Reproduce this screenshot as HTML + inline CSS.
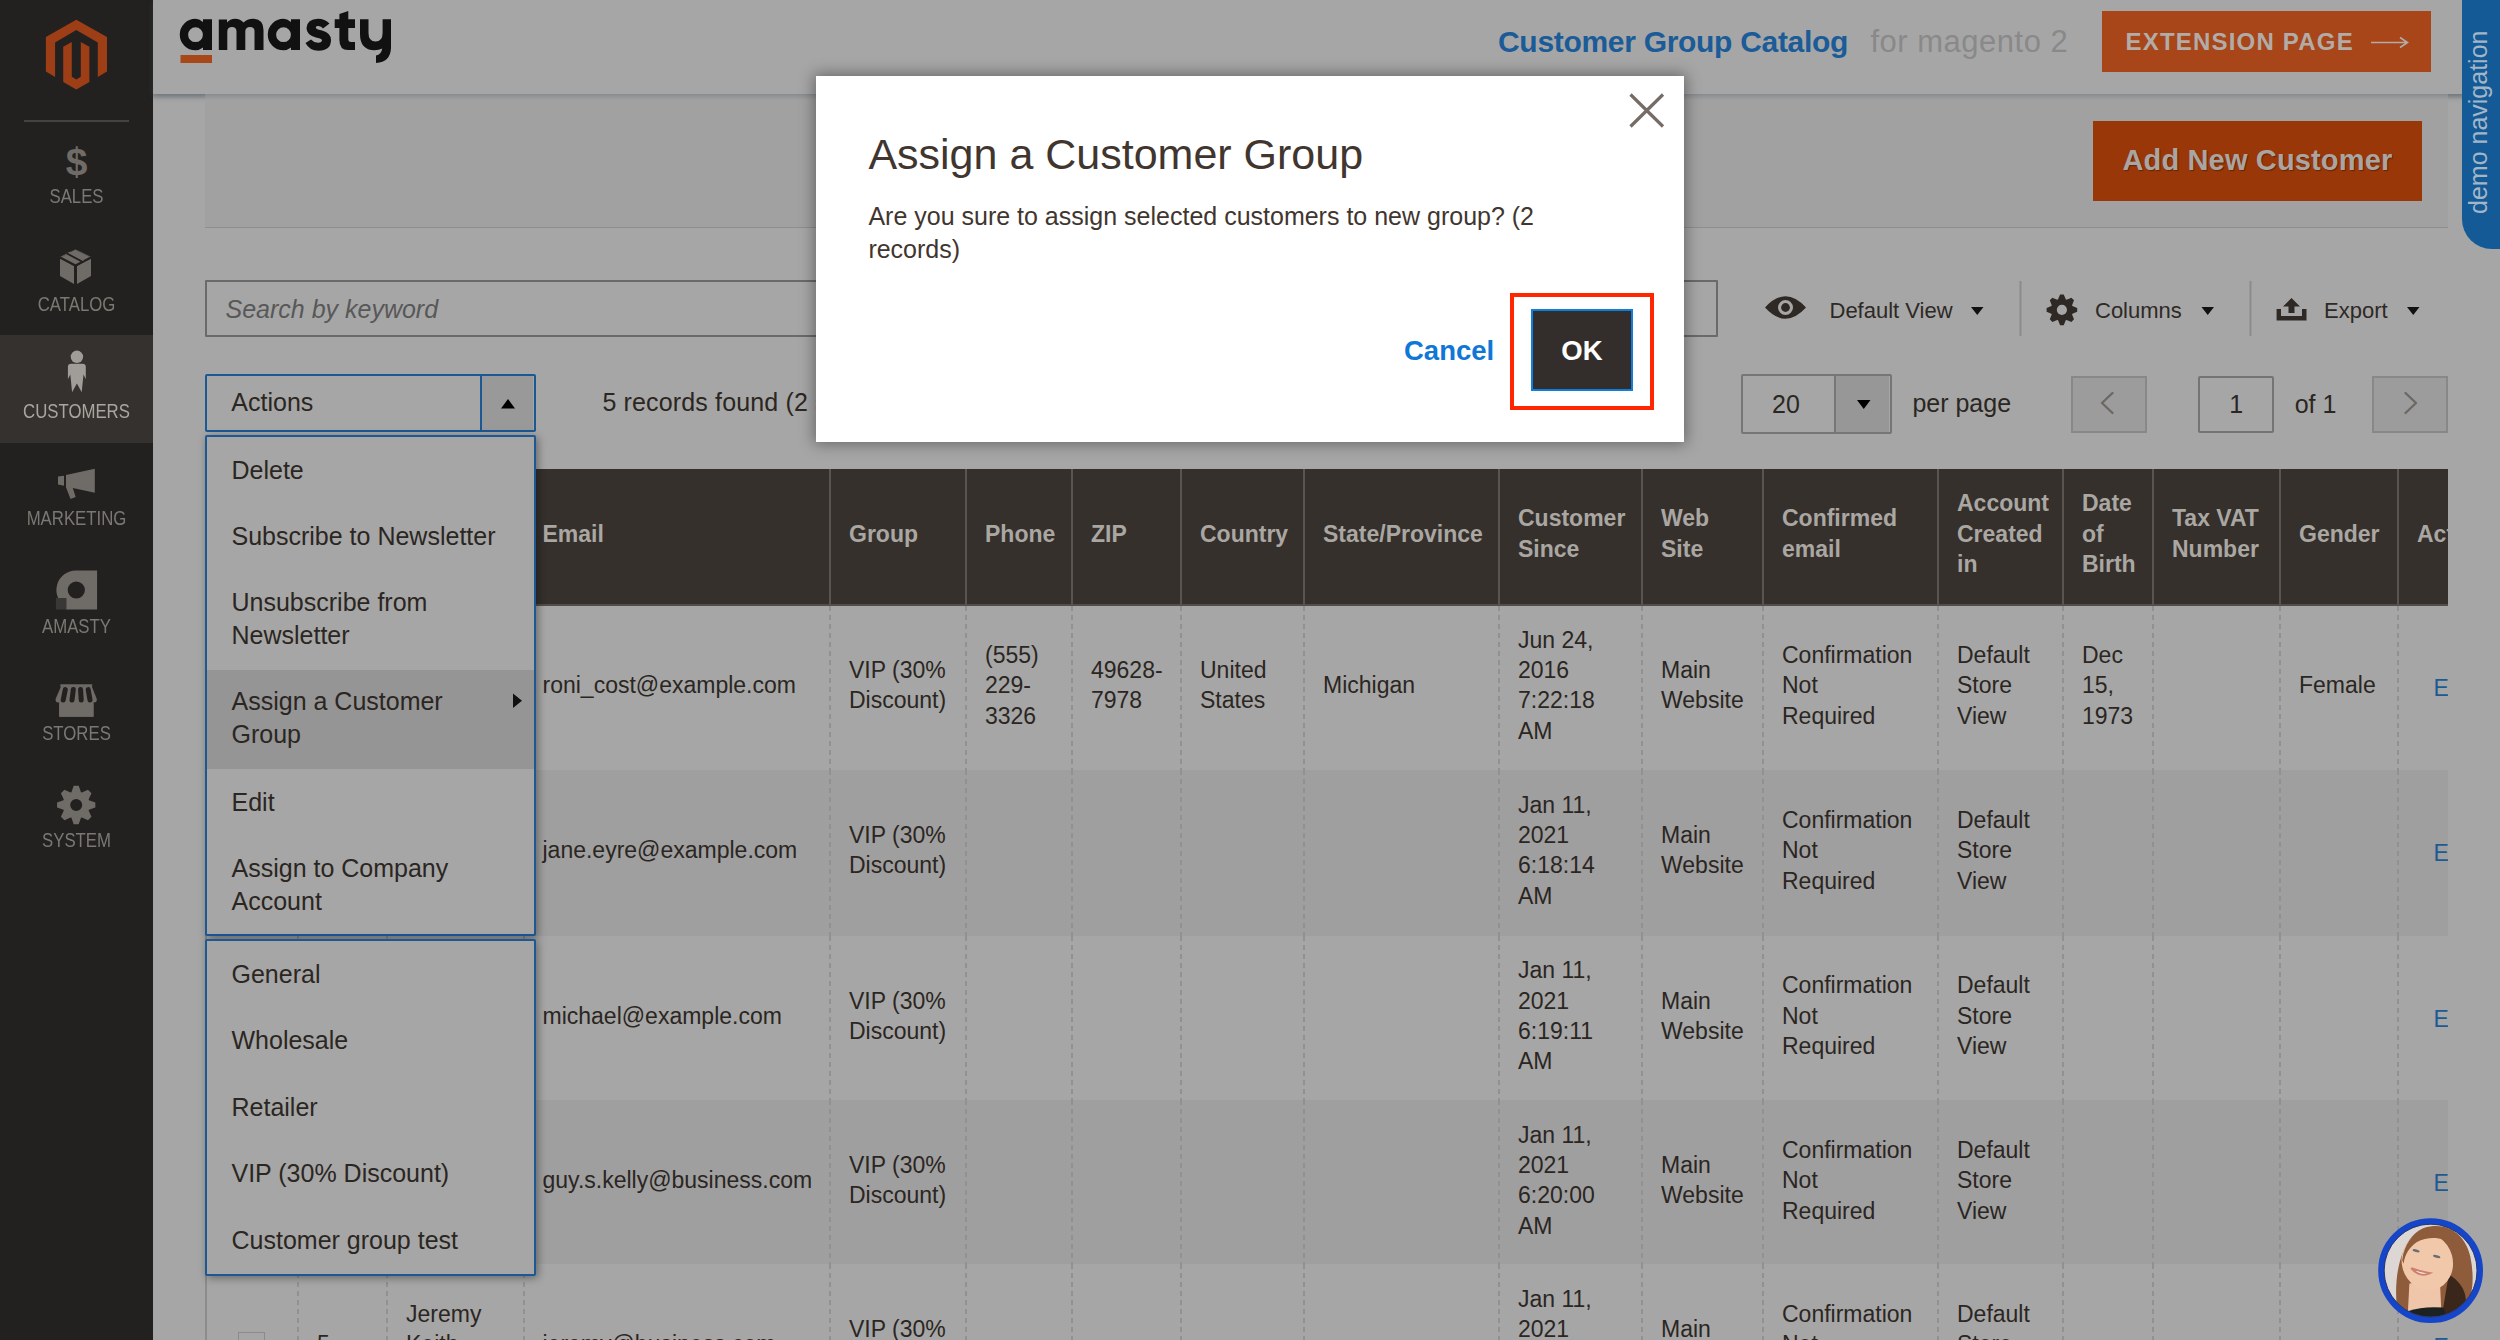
<!DOCTYPE html>
<html><head><meta charset="utf-8"><title>Customers</title>
<style>
*{box-sizing:border-box;margin:0;padding:0}
html,body{width:2500px;height:1340px;overflow:hidden}
body{position:relative;background:#a6a6a6;font-family:"Liberation Sans",sans-serif;color:#2b2622}
.t{position:absolute;white-space:nowrap}
.b{position:absolute}
svg{position:absolute;overflow:visible}
</style></head><body>

<div class="b" style="left:0.00px;top:0.00px;width:153.00px;height:1340.00px;background:#222120"></div>
<div class="b" style="left:0.00px;top:335.00px;width:153.00px;height:108.00px;background:#35312e"></div>
<div class="b" style="left:24.00px;top:119.50px;width:105.00px;height:2.00px;background:#46423f"></div>
<svg style="left:0;top:0" width="153" height="100" viewBox="0 0 153 100">
<path fill="#9d3e17" d="M76.3 19.7 L107 37 L107 71.6 L97.8 77 L97.8 42.4 L76.3 30 L55.1 42.4 L55.1 77 L45.85 71.6 L45.85 37 Z"/>
<path fill="#9d3e17" d="M63.2 46.8 L71.8 42 L71.8 76.7 L76.3 79.4 L80.8 76.7 L80.8 42 L89.4 46.8 L89.4 82 L76.3 89.5 L63.2 82 Z"/>
</svg>
<div class="t" style="left:0.00px;top:187.49px;font-size:19.50px;line-height:19.50px;color:#7b7873;width:153.00px;text-align:center;transform:scaleX(0.86);transform-origin:76.5px 0;">SALES</div>
<div class="t" style="left:0.00px;top:295.49px;font-size:19.50px;line-height:19.50px;color:#7b7873;width:153.00px;text-align:center;transform:scaleX(0.86);transform-origin:76.5px 0;">CATALOG</div>
<div class="t" style="left:0.00px;top:402.49px;font-size:19.50px;line-height:19.50px;color:#a9a59f;width:153.00px;text-align:center;transform:scaleX(0.86);transform-origin:76.5px 0;">CUSTOMERS</div>
<div class="t" style="left:0.00px;top:509.49px;font-size:19.50px;line-height:19.50px;color:#7b7873;width:153.00px;text-align:center;transform:scaleX(0.86);transform-origin:76.5px 0;">MARKETING</div>
<div class="t" style="left:0.00px;top:617.49px;font-size:19.50px;line-height:19.50px;color:#7b7873;width:153.00px;text-align:center;transform:scaleX(0.86);transform-origin:76.5px 0;">AMASTY</div>
<div class="t" style="left:0.00px;top:724.49px;font-size:19.50px;line-height:19.50px;color:#7b7873;width:153.00px;text-align:center;transform:scaleX(0.86);transform-origin:76.5px 0;">STORES</div>
<div class="t" style="left:0.00px;top:831.49px;font-size:19.50px;line-height:19.50px;color:#7b7873;width:153.00px;text-align:center;transform:scaleX(0.86);transform-origin:76.5px 0;">SYSTEM</div>
<div class="t" style="left:0.00px;top:141.99px;font-size:39.00px;line-height:39.00px;color:#6f6b67;font-weight:bold;width:153.00px;text-align:center;">$</div>
<svg style="left:0;top:0" width="153" height="900">
<g fill="#6f6b67">
<path d="M75.5 249 L91 257 L91 276 L77 284 L77 266 L91 258 Z" />
<path d="M75.5 249 L60 257 L60 276 L74 284 L74 266 L60 258 Z" />
<path d="M60.5 257.5 L75.5 249.5 L90.5 257.5 L75.5 265.5 Z"/>
</g>
<path d="M60 257.5 L75.5 265.5 L91 257.5" stroke="#222120" stroke-width="2.2" fill="none"/>
<path d="M67 253.2 L82 261.2" stroke="#222120" stroke-width="2.2" fill="none"/>
<path d="M68.5 252.4 L83.5 260.4" stroke="#6f6b67" stroke-width="1.6" fill="none"/>
</svg>
<svg style="left:0;top:0" width="153" height="900">
<g fill="#a09c97">
<circle cx="76.9" cy="356.8" r="6.2"/>
<path d="M67.9 366.7 Q67.9 363.7 71.2 363.7 L82.5 363.7 Q85.8 363.7 85.8 366.7 L85.8 379.2 L83.5 374.4 L81.7 392.3 L76.9 383.4 L72.1 392.3 L70.3 374.4 L67.9 379.2 Z"/>
</g>
</svg>
<svg style="left:0;top:0" width="153" height="900">
<g fill="#6f6b67">
<path d="M66 475.1 L94.8 468.8 L94.8 492.8 L72.8 488 L75.7 497 L70.5 499 L66 487.2 Z"/>
<path d="M58 476.6 L64 475.7 L64 485.7 L58 484.6 Z"/>
</g>
</svg>
<svg style="left:0;top:0" width="153" height="900">
<path fill="#6f6b67" fill-rule="evenodd" d="M76.3 570.5 L97.1 570.5 L97.1 609.5 L66 609.5 L66 606.8 A19.5 19.5 0 0 1 76.3 570.5 Z M76.3 581.4 A8.6 8.6 0 1 0 76.3 598.6 A8.6 8.6 0 1 0 76.3 581.4 Z"/>
<rect x="55.9" y="598" width="10.6" height="11.5" fill="#3a3836"/>
</svg>
<svg style="left:0;top:0" width="153" height="900">
<g fill="#6f6b67">
<rect x="60.4" y="684.3" width="31.8" height="2.6"/>
<path d="M61 686.5 L91.8 686.5 L96.8 699 Q97 702.6 94 702.6 L58.3 702.6 Q55.3 702.6 55.6 699 Z"/>
<rect x="59.2" y="702" width="34.3" height="14.7"/>
</g>
<g stroke="#222120" stroke-width="5" stroke-linecap="round">
<path d="M65.3 689.6 L63.2 700"/><path d="M73.3 689.6 L72 700"/><path d="M80.6 689.6 L81.2 700"/><path d="M88.2 689.6 L90 700"/>
</g>
<rect x="59.2" y="703.3" width="34.3" height="13.4" fill="#6f6b67"/>
</svg>
<svg style="left:0;top:0" width="153" height="900">
<path fill="#6f6b67" fill-rule="evenodd" d="M71.41 792.27 L73.70 785.86 L78.70 785.86 L80.99 792.27 L81.81 792.61 L87.96 789.70 L91.50 793.24 L88.59 799.39 L88.93 800.21 L95.34 802.50 L95.34 807.50 L88.93 809.79 L88.59 810.61 L91.50 816.76 L87.96 820.30 L81.81 817.39 L80.99 817.73 L78.70 824.14 L73.70 824.14 L71.41 817.73 L70.59 817.39 L64.44 820.30 L60.90 816.76 L63.81 810.61 L63.47 809.79 L57.06 807.50 L57.06 802.50 L63.47 800.21 L63.81 799.39 L60.90 793.24 L64.44 789.70 L70.59 792.61 Z M76.2 799 A6 6 0 1 0 76.2 811 A6 6 0 1 0 76.2 799 Z"/>
</svg>
<div class="b" style="left:153.00px;top:0.00px;width:2347.00px;height:94.00px;background:#a6a6a6;box-shadow:0 2px 6px rgba(60,70,80,.45)"></div>
<svg style="left:0;top:0" width="420" height="100">
<g fill="#111111">
<path fill-rule="evenodd" d="M212 19.2 L203 19.2 L203 22 Q199 18.8 195.5 18.8 A15.7 15.7 0 1 0 195.5 50.3 Q199.5 50.3 203 47.6 L203 50 L212 50 Z M195.5 27.3 A7.4 7.4 0 1 0 195.5 42.1 A7.4 7.4 0 1 0 195.5 27.3 Z"/>
<path d="M218.8 19.5 L227 19.5 L227 22.5 Q230 18.7 235 18.7 Q240.5 18.7 243.5 22.5 Q247 18.7 253 18.7 Q263.5 19 263.5 30 L263.5 50 L254.5 50 L254.5 31 Q254.5 27 250 27 Q245.3 27 245.3 31.5 L245.3 50 L236.5 50 L236.5 31.5 Q236.5 27 232 27 Q227.3 27 227.3 31.5 L227.3 50 L218.8 50 Z"/>
<path fill-rule="evenodd" d="M300 19.2 L291 19.2 L291 22 Q287 18.8 283.5 18.8 A15.7 15.7 0 1 0 283.5 50.3 Q287.5 50.3 291 47.6 L291 50 L300 50 Z M283.5 27.3 A7.4 7.4 0 1 0 283.5 42.1 A7.4 7.4 0 1 0 283.5 27.3 Z"/>
<path d="M329.5 23.5 Q325 18.7 318 18.7 Q307 19 306.5 28 Q306.5 35 316 37.5 L320 38.5 Q322.5 39.3 322 41 Q321 43 318 42.8 Q313.5 42.5 311 39.5 L305.5 43 Q309.5 50.7 318.5 50.7 Q331 50.5 331 40 Q331 33 322 30.5 L318 29.5 Q315.5 28.8 315.8 27.2 Q316.2 25.8 318.5 26 Q321.5 26.2 323 28.5 Z"/>
<path d="M339.4 14 L348.3 11 L348.3 19.2 L355 19.2 L355 28 L348.3 28 L348.3 39 Q348.3 42 351 42 L355 42 L355 50 L348 50 Q339.4 50 339.4 40 L339.4 28 L334.7 28 L334.7 19.2 L339.4 19.2 Z"/>
<path d="M360 19.2 L368.5 19.2 L368.5 33 Q368.5 41.5 375.5 41.5 Q382.6 41.5 382.6 33 L382.6 19.2 L391 19.2 L391 48 Q390.5 62 376 63 L376 55.5 Q381.5 54.5 382.2 48.5 Q379 50.3 374.5 50.3 Q360 50 360 34 Z"/>
</g>
<rect x="180.5" y="55" width="31.5" height="8" fill="#a84718"/>
</svg>
<div class="t" style="left:1498.00px;top:26.60px;font-size:30.00px;line-height:30.00px;color:#1a5b98;font-weight:bold;letter-spacing:-0.30px;">Customer Group Catalog</div>
<div class="t" style="left:1870.50px;top:25.76px;font-size:31.00px;line-height:31.00px;color:#898989;letter-spacing:0.50px;">for magento 2</div>
<div class="b" style="left:2102.00px;top:11.00px;width:329.00px;height:61.00px;background:#a84619"></div>
<div class="t" style="left:2125.50px;top:29.68px;font-size:24.00px;line-height:24.00px;color:#b2aca8;font-weight:bold;letter-spacing:1.20px;">EXTENSION PAGE</div>
<svg style="left:0;top:0" width="2500" height="100">
<path d="M2371 42.5 L2407 42.5 M2400 37.5 L2407.5 42.5 L2400 47.5" stroke="#b2aca8" stroke-width="1.6" fill="none"/>
</svg>
<div class="b" style="left:205.00px;top:94.00px;width:2243.00px;height:134.00px;background:#a1a1a1;border-bottom:1px solid #8e8e8e"></div>
<div class="b" style="left:153.00px;top:94.00px;width:2347.00px;height:6.00px;background:linear-gradient(rgba(90,100,110,.35),rgba(90,100,110,0))"></div>
<div class="b" style="left:2093.00px;top:121.00px;width:329.00px;height:79.50px;background:#993708"></div>
<div class="t" style="left:2122.50px;top:146.15px;font-size:29.00px;line-height:29.00px;color:#aaa5a1;font-weight:bold;letter-spacing:0.15px;text-shadow:1px 1px 1px rgba(0,0,0,.35);">Add New Customer</div>
<div class="b" style="left:205.00px;top:280.30px;width:1512.50px;height:57.00px;background:#a6a6a6;border:2px solid #6a6a6a;border-radius:1px"></div>
<div class="t" style="left:225.50px;top:296.54px;font-size:25.00px;line-height:25.00px;color:#585858;font-style:italic;">Search by keyword</div>
<svg style="left:0;top:0" width="2500" height="500">
<path fill="#2e2925" fill-rule="evenodd" d="M1765 307.5 Q1785.5 285 1806 307.5 Q1785.5 330 1765 307.5 Z M1785.5 300 A7.5 7.5 0 1 0 1785.5 315 A7.5 7.5 0 1 0 1785.5 300 Z"/>
<circle cx="1785.5" cy="307.5" r="4.4" fill="#2e2925"/>
<path fill="#111" d="M1971 307 L1983.5 307 L1977.25 315 Z M2201.5 307 L2214 307 L2207.75 315 Z M2407 307 L2419.5 307 L2413.25 315 Z"/>
<rect x="2019.5" y="281" width="2" height="55" fill="#8b8b8b"/>
<rect x="2249.5" y="281" width="2" height="55" fill="#8b8b8b"/>
<path fill="#2e2925" fill-rule="evenodd" d="M2058.06 299.33 L2060.06 294.56 L2063.74 294.56 L2065.74 299.33 L2066.62 299.69 L2071.41 297.74 L2074.01 300.34 L2072.06 305.13 L2072.42 306.01 L2077.19 308.01 L2077.19 311.69 L2072.42 313.69 L2072.06 314.57 L2074.01 319.36 L2071.41 321.96 L2066.62 320.01 L2065.74 320.37 L2063.74 325.14 L2060.06 325.14 L2058.06 320.37 L2057.18 320.01 L2052.39 321.96 L2049.79 319.36 L2051.74 314.57 L2051.38 313.69 L2046.61 311.69 L2046.61 308.01 L2051.38 306.01 L2051.74 305.13 L2049.79 300.34 L2052.39 297.74 L2057.18 299.69 Z M2061.9 304.75 A5.1 5.1 0 1 0 2061.9 314.95 A5.1 5.1 0 1 0 2061.9 304.75 Z"/>
<path fill="#2e2925" d="M2276.6 309 L2281 309 L2281 316 L2302 316 L2302 309 L2306.5 309 L2306.5 320.5 L2276.6 320.5 Z M2291.5 298 L2300 306.5 L2294.5 306.5 L2294.5 313 L2288.5 313 L2288.5 306.5 L2283 306.5 Z"/>
</svg>
<div class="t" style="left:1829.50px;top:299.78px;font-size:22.00px;line-height:22.00px;color:#2e2925;">Default View</div>
<div class="t" style="left:2095.00px;top:299.78px;font-size:22.00px;line-height:22.00px;color:#2e2925;">Columns</div>
<div class="t" style="left:2324.00px;top:299.78px;font-size:22.00px;line-height:22.00px;color:#2e2925;">Export</div>
<div class="b" style="left:205.00px;top:374.00px;width:330.50px;height:57.50px;background:#a6a6a6;border:2px solid #1b5894;border-radius:2px"></div>
<div class="b" style="left:479.50px;top:376.00px;width:53.50px;height:53.50px;background:#999999;border-left:2px solid #1b5894"></div>
<svg style="left:0;top:0" width="600" height="500">
<path fill="#000" d="M501 408.5 L515 408.5 L508 399 Z"/>
</svg>
<div class="t" style="left:231.30px;top:390.14px;font-size:25.00px;line-height:25.00px;color:#2b2622;">Actions</div>
<div class="t" style="left:602.40px;top:390.44px;font-size:25.00px;line-height:25.00px;color:#2b2622;letter-spacing:0.15px;">5 records found (2 selected)</div>
<div class="b" style="left:1740.50px;top:374.00px;width:151.00px;height:59.50px;background:#a6a6a6;border:2px solid #767676;border-radius:2px"></div>
<div class="b" style="left:1834.30px;top:376.00px;width:55.20px;height:55.50px;background:#979797;border-left:2px solid #767676"></div>
<div class="t" style="left:1772.00px;top:392.34px;font-size:25.00px;line-height:25.00px;color:#2b2622;">20</div>
<div class="t" style="left:1912.40px;top:391.34px;font-size:25.00px;line-height:25.00px;color:#2b2622;">per page</div>
<div class="b" style="left:2071.00px;top:376.40px;width:76.00px;height:56.20px;background:#9c9c9c;border:2px solid #888888"></div>
<div class="b" style="left:2198.30px;top:376.20px;width:75.70px;height:56.60px;background:#a6a6a6;border:2px solid #747474;border-radius:2px"></div>
<div class="t" style="left:2198.60px;top:391.84px;font-size:25.00px;line-height:25.00px;color:#2b2622;width:75.20px;text-align:center;">1</div>
<div class="t" style="left:2294.70px;top:391.84px;font-size:25.00px;line-height:25.00px;color:#2b2622;">of 1</div>
<div class="b" style="left:2372.00px;top:376.40px;width:76.00px;height:56.20px;background:#9c9c9c;border:2px solid #888888"></div>
<svg style="left:0;top:0" width="2500" height="500">
<path fill="#000" d="M1857 400 L1870.5 400 L1863.75 409 Z"/>
<path d="M2112.5 393 L2102 403 L2112.5 413" stroke="#6c6864" stroke-width="2.4" stroke-linecap="round" stroke-linejoin="round" fill="none"/>
<path d="M2405.5 393 L2416 403 L2405.5 413" stroke="#6c6864" stroke-width="2.4" stroke-linecap="round" stroke-linejoin="round" fill="none"/>
</svg>
<div class="b" style="left:205px;top:0;width:2243px;height:1340px;overflow:hidden">
<div class="b" style="left:-205px;top:0;width:2500px;height:1340px">
<div class="b" style="left:205.00px;top:469.00px;width:2315.00px;height:135.50px;background:#35302c"></div>
<div class="b" style="left:205.00px;top:604.00px;width:2315.00px;height:2.00px;background:#534d49"></div>
<div class="b" style="left:205.00px;top:606.50px;width:2315.00px;height:165.00px;background:#a6a6a6"></div>
<div class="b" style="left:205.00px;top:770.00px;width:2315.00px;height:165.50px;background:#9f9f9f"></div>
<div class="b" style="left:205.00px;top:935.50px;width:2315.00px;height:164.50px;background:#a6a6a6"></div>
<div class="b" style="left:205.00px;top:1100.00px;width:2315.00px;height:164.00px;background:#9f9f9f"></div>
<div class="b" style="left:205.00px;top:1264.00px;width:2315.00px;height:165.00px;background:#a6a6a6"></div>
<div class="b" style="left:297.00px;top:469.00px;width:2.00px;height:135.50px;background:#5a5450"></div>
<div class="b" style="left:297.00px;top:606.00px;width:2.00px;height:164.00px;background:repeating-linear-gradient(to bottom,#919191 0 5px,transparent 5px 9px)"></div>
<div class="b" style="left:297.00px;top:770.00px;width:2.00px;height:165.50px;background:repeating-linear-gradient(to bottom,#919191 0 5px,transparent 5px 9px)"></div>
<div class="b" style="left:297.00px;top:935.50px;width:2.00px;height:164.50px;background:repeating-linear-gradient(to bottom,#919191 0 5px,transparent 5px 9px)"></div>
<div class="b" style="left:297.00px;top:1100.00px;width:2.00px;height:164.00px;background:repeating-linear-gradient(to bottom,#919191 0 5px,transparent 5px 9px)"></div>
<div class="b" style="left:297.00px;top:1264.00px;width:2.00px;height:165.00px;background:repeating-linear-gradient(to bottom,#919191 0 5px,transparent 5px 9px)"></div>
<div class="b" style="left:386.00px;top:469.00px;width:2.00px;height:135.50px;background:#5a5450"></div>
<div class="b" style="left:386.00px;top:606.00px;width:2.00px;height:164.00px;background:repeating-linear-gradient(to bottom,#919191 0 5px,transparent 5px 9px)"></div>
<div class="b" style="left:386.00px;top:770.00px;width:2.00px;height:165.50px;background:repeating-linear-gradient(to bottom,#919191 0 5px,transparent 5px 9px)"></div>
<div class="b" style="left:386.00px;top:935.50px;width:2.00px;height:164.50px;background:repeating-linear-gradient(to bottom,#919191 0 5px,transparent 5px 9px)"></div>
<div class="b" style="left:386.00px;top:1100.00px;width:2.00px;height:164.00px;background:repeating-linear-gradient(to bottom,#919191 0 5px,transparent 5px 9px)"></div>
<div class="b" style="left:386.00px;top:1264.00px;width:2.00px;height:165.00px;background:repeating-linear-gradient(to bottom,#919191 0 5px,transparent 5px 9px)"></div>
<div class="b" style="left:522.50px;top:469.00px;width:2.00px;height:135.50px;background:#5a5450"></div>
<div class="b" style="left:522.50px;top:606.00px;width:2.00px;height:164.00px;background:repeating-linear-gradient(to bottom,#919191 0 5px,transparent 5px 9px)"></div>
<div class="b" style="left:522.50px;top:770.00px;width:2.00px;height:165.50px;background:repeating-linear-gradient(to bottom,#919191 0 5px,transparent 5px 9px)"></div>
<div class="b" style="left:522.50px;top:935.50px;width:2.00px;height:164.50px;background:repeating-linear-gradient(to bottom,#919191 0 5px,transparent 5px 9px)"></div>
<div class="b" style="left:522.50px;top:1100.00px;width:2.00px;height:164.00px;background:repeating-linear-gradient(to bottom,#919191 0 5px,transparent 5px 9px)"></div>
<div class="b" style="left:522.50px;top:1264.00px;width:2.00px;height:165.00px;background:repeating-linear-gradient(to bottom,#919191 0 5px,transparent 5px 9px)"></div>
<div class="b" style="left:829.00px;top:469.00px;width:2.00px;height:135.50px;background:#5a5450"></div>
<div class="b" style="left:829.00px;top:606.00px;width:2.00px;height:164.00px;background:repeating-linear-gradient(to bottom,#919191 0 5px,transparent 5px 9px)"></div>
<div class="b" style="left:829.00px;top:770.00px;width:2.00px;height:165.50px;background:repeating-linear-gradient(to bottom,#919191 0 5px,transparent 5px 9px)"></div>
<div class="b" style="left:829.00px;top:935.50px;width:2.00px;height:164.50px;background:repeating-linear-gradient(to bottom,#919191 0 5px,transparent 5px 9px)"></div>
<div class="b" style="left:829.00px;top:1100.00px;width:2.00px;height:164.00px;background:repeating-linear-gradient(to bottom,#919191 0 5px,transparent 5px 9px)"></div>
<div class="b" style="left:829.00px;top:1264.00px;width:2.00px;height:165.00px;background:repeating-linear-gradient(to bottom,#919191 0 5px,transparent 5px 9px)"></div>
<div class="b" style="left:965.00px;top:469.00px;width:2.00px;height:135.50px;background:#5a5450"></div>
<div class="b" style="left:965.00px;top:606.00px;width:2.00px;height:164.00px;background:repeating-linear-gradient(to bottom,#919191 0 5px,transparent 5px 9px)"></div>
<div class="b" style="left:965.00px;top:770.00px;width:2.00px;height:165.50px;background:repeating-linear-gradient(to bottom,#919191 0 5px,transparent 5px 9px)"></div>
<div class="b" style="left:965.00px;top:935.50px;width:2.00px;height:164.50px;background:repeating-linear-gradient(to bottom,#919191 0 5px,transparent 5px 9px)"></div>
<div class="b" style="left:965.00px;top:1100.00px;width:2.00px;height:164.00px;background:repeating-linear-gradient(to bottom,#919191 0 5px,transparent 5px 9px)"></div>
<div class="b" style="left:965.00px;top:1264.00px;width:2.00px;height:165.00px;background:repeating-linear-gradient(to bottom,#919191 0 5px,transparent 5px 9px)"></div>
<div class="b" style="left:1071.00px;top:469.00px;width:2.00px;height:135.50px;background:#5a5450"></div>
<div class="b" style="left:1071.00px;top:606.00px;width:2.00px;height:164.00px;background:repeating-linear-gradient(to bottom,#919191 0 5px,transparent 5px 9px)"></div>
<div class="b" style="left:1071.00px;top:770.00px;width:2.00px;height:165.50px;background:repeating-linear-gradient(to bottom,#919191 0 5px,transparent 5px 9px)"></div>
<div class="b" style="left:1071.00px;top:935.50px;width:2.00px;height:164.50px;background:repeating-linear-gradient(to bottom,#919191 0 5px,transparent 5px 9px)"></div>
<div class="b" style="left:1071.00px;top:1100.00px;width:2.00px;height:164.00px;background:repeating-linear-gradient(to bottom,#919191 0 5px,transparent 5px 9px)"></div>
<div class="b" style="left:1071.00px;top:1264.00px;width:2.00px;height:165.00px;background:repeating-linear-gradient(to bottom,#919191 0 5px,transparent 5px 9px)"></div>
<div class="b" style="left:1180.00px;top:469.00px;width:2.00px;height:135.50px;background:#5a5450"></div>
<div class="b" style="left:1180.00px;top:606.00px;width:2.00px;height:164.00px;background:repeating-linear-gradient(to bottom,#919191 0 5px,transparent 5px 9px)"></div>
<div class="b" style="left:1180.00px;top:770.00px;width:2.00px;height:165.50px;background:repeating-linear-gradient(to bottom,#919191 0 5px,transparent 5px 9px)"></div>
<div class="b" style="left:1180.00px;top:935.50px;width:2.00px;height:164.50px;background:repeating-linear-gradient(to bottom,#919191 0 5px,transparent 5px 9px)"></div>
<div class="b" style="left:1180.00px;top:1100.00px;width:2.00px;height:164.00px;background:repeating-linear-gradient(to bottom,#919191 0 5px,transparent 5px 9px)"></div>
<div class="b" style="left:1180.00px;top:1264.00px;width:2.00px;height:165.00px;background:repeating-linear-gradient(to bottom,#919191 0 5px,transparent 5px 9px)"></div>
<div class="b" style="left:1303.00px;top:469.00px;width:2.00px;height:135.50px;background:#5a5450"></div>
<div class="b" style="left:1303.00px;top:606.00px;width:2.00px;height:164.00px;background:repeating-linear-gradient(to bottom,#919191 0 5px,transparent 5px 9px)"></div>
<div class="b" style="left:1303.00px;top:770.00px;width:2.00px;height:165.50px;background:repeating-linear-gradient(to bottom,#919191 0 5px,transparent 5px 9px)"></div>
<div class="b" style="left:1303.00px;top:935.50px;width:2.00px;height:164.50px;background:repeating-linear-gradient(to bottom,#919191 0 5px,transparent 5px 9px)"></div>
<div class="b" style="left:1303.00px;top:1100.00px;width:2.00px;height:164.00px;background:repeating-linear-gradient(to bottom,#919191 0 5px,transparent 5px 9px)"></div>
<div class="b" style="left:1303.00px;top:1264.00px;width:2.00px;height:165.00px;background:repeating-linear-gradient(to bottom,#919191 0 5px,transparent 5px 9px)"></div>
<div class="b" style="left:1498.00px;top:469.00px;width:2.00px;height:135.50px;background:#5a5450"></div>
<div class="b" style="left:1498.00px;top:606.00px;width:2.00px;height:164.00px;background:repeating-linear-gradient(to bottom,#919191 0 5px,transparent 5px 9px)"></div>
<div class="b" style="left:1498.00px;top:770.00px;width:2.00px;height:165.50px;background:repeating-linear-gradient(to bottom,#919191 0 5px,transparent 5px 9px)"></div>
<div class="b" style="left:1498.00px;top:935.50px;width:2.00px;height:164.50px;background:repeating-linear-gradient(to bottom,#919191 0 5px,transparent 5px 9px)"></div>
<div class="b" style="left:1498.00px;top:1100.00px;width:2.00px;height:164.00px;background:repeating-linear-gradient(to bottom,#919191 0 5px,transparent 5px 9px)"></div>
<div class="b" style="left:1498.00px;top:1264.00px;width:2.00px;height:165.00px;background:repeating-linear-gradient(to bottom,#919191 0 5px,transparent 5px 9px)"></div>
<div class="b" style="left:1641.00px;top:469.00px;width:2.00px;height:135.50px;background:#5a5450"></div>
<div class="b" style="left:1641.00px;top:606.00px;width:2.00px;height:164.00px;background:repeating-linear-gradient(to bottom,#919191 0 5px,transparent 5px 9px)"></div>
<div class="b" style="left:1641.00px;top:770.00px;width:2.00px;height:165.50px;background:repeating-linear-gradient(to bottom,#919191 0 5px,transparent 5px 9px)"></div>
<div class="b" style="left:1641.00px;top:935.50px;width:2.00px;height:164.50px;background:repeating-linear-gradient(to bottom,#919191 0 5px,transparent 5px 9px)"></div>
<div class="b" style="left:1641.00px;top:1100.00px;width:2.00px;height:164.00px;background:repeating-linear-gradient(to bottom,#919191 0 5px,transparent 5px 9px)"></div>
<div class="b" style="left:1641.00px;top:1264.00px;width:2.00px;height:165.00px;background:repeating-linear-gradient(to bottom,#919191 0 5px,transparent 5px 9px)"></div>
<div class="b" style="left:1762.00px;top:469.00px;width:2.00px;height:135.50px;background:#5a5450"></div>
<div class="b" style="left:1762.00px;top:606.00px;width:2.00px;height:164.00px;background:repeating-linear-gradient(to bottom,#919191 0 5px,transparent 5px 9px)"></div>
<div class="b" style="left:1762.00px;top:770.00px;width:2.00px;height:165.50px;background:repeating-linear-gradient(to bottom,#919191 0 5px,transparent 5px 9px)"></div>
<div class="b" style="left:1762.00px;top:935.50px;width:2.00px;height:164.50px;background:repeating-linear-gradient(to bottom,#919191 0 5px,transparent 5px 9px)"></div>
<div class="b" style="left:1762.00px;top:1100.00px;width:2.00px;height:164.00px;background:repeating-linear-gradient(to bottom,#919191 0 5px,transparent 5px 9px)"></div>
<div class="b" style="left:1762.00px;top:1264.00px;width:2.00px;height:165.00px;background:repeating-linear-gradient(to bottom,#919191 0 5px,transparent 5px 9px)"></div>
<div class="b" style="left:1937.00px;top:469.00px;width:2.00px;height:135.50px;background:#5a5450"></div>
<div class="b" style="left:1937.00px;top:606.00px;width:2.00px;height:164.00px;background:repeating-linear-gradient(to bottom,#919191 0 5px,transparent 5px 9px)"></div>
<div class="b" style="left:1937.00px;top:770.00px;width:2.00px;height:165.50px;background:repeating-linear-gradient(to bottom,#919191 0 5px,transparent 5px 9px)"></div>
<div class="b" style="left:1937.00px;top:935.50px;width:2.00px;height:164.50px;background:repeating-linear-gradient(to bottom,#919191 0 5px,transparent 5px 9px)"></div>
<div class="b" style="left:1937.00px;top:1100.00px;width:2.00px;height:164.00px;background:repeating-linear-gradient(to bottom,#919191 0 5px,transparent 5px 9px)"></div>
<div class="b" style="left:1937.00px;top:1264.00px;width:2.00px;height:165.00px;background:repeating-linear-gradient(to bottom,#919191 0 5px,transparent 5px 9px)"></div>
<div class="b" style="left:2062.00px;top:469.00px;width:2.00px;height:135.50px;background:#5a5450"></div>
<div class="b" style="left:2062.00px;top:606.00px;width:2.00px;height:164.00px;background:repeating-linear-gradient(to bottom,#919191 0 5px,transparent 5px 9px)"></div>
<div class="b" style="left:2062.00px;top:770.00px;width:2.00px;height:165.50px;background:repeating-linear-gradient(to bottom,#919191 0 5px,transparent 5px 9px)"></div>
<div class="b" style="left:2062.00px;top:935.50px;width:2.00px;height:164.50px;background:repeating-linear-gradient(to bottom,#919191 0 5px,transparent 5px 9px)"></div>
<div class="b" style="left:2062.00px;top:1100.00px;width:2.00px;height:164.00px;background:repeating-linear-gradient(to bottom,#919191 0 5px,transparent 5px 9px)"></div>
<div class="b" style="left:2062.00px;top:1264.00px;width:2.00px;height:165.00px;background:repeating-linear-gradient(to bottom,#919191 0 5px,transparent 5px 9px)"></div>
<div class="b" style="left:2152.00px;top:469.00px;width:2.00px;height:135.50px;background:#5a5450"></div>
<div class="b" style="left:2152.00px;top:606.00px;width:2.00px;height:164.00px;background:repeating-linear-gradient(to bottom,#919191 0 5px,transparent 5px 9px)"></div>
<div class="b" style="left:2152.00px;top:770.00px;width:2.00px;height:165.50px;background:repeating-linear-gradient(to bottom,#919191 0 5px,transparent 5px 9px)"></div>
<div class="b" style="left:2152.00px;top:935.50px;width:2.00px;height:164.50px;background:repeating-linear-gradient(to bottom,#919191 0 5px,transparent 5px 9px)"></div>
<div class="b" style="left:2152.00px;top:1100.00px;width:2.00px;height:164.00px;background:repeating-linear-gradient(to bottom,#919191 0 5px,transparent 5px 9px)"></div>
<div class="b" style="left:2152.00px;top:1264.00px;width:2.00px;height:165.00px;background:repeating-linear-gradient(to bottom,#919191 0 5px,transparent 5px 9px)"></div>
<div class="b" style="left:2279.00px;top:469.00px;width:2.00px;height:135.50px;background:#5a5450"></div>
<div class="b" style="left:2279.00px;top:606.00px;width:2.00px;height:164.00px;background:repeating-linear-gradient(to bottom,#919191 0 5px,transparent 5px 9px)"></div>
<div class="b" style="left:2279.00px;top:770.00px;width:2.00px;height:165.50px;background:repeating-linear-gradient(to bottom,#919191 0 5px,transparent 5px 9px)"></div>
<div class="b" style="left:2279.00px;top:935.50px;width:2.00px;height:164.50px;background:repeating-linear-gradient(to bottom,#919191 0 5px,transparent 5px 9px)"></div>
<div class="b" style="left:2279.00px;top:1100.00px;width:2.00px;height:164.00px;background:repeating-linear-gradient(to bottom,#919191 0 5px,transparent 5px 9px)"></div>
<div class="b" style="left:2279.00px;top:1264.00px;width:2.00px;height:165.00px;background:repeating-linear-gradient(to bottom,#919191 0 5px,transparent 5px 9px)"></div>
<div class="b" style="left:2397.00px;top:469.00px;width:2.00px;height:135.50px;background:#5a5450"></div>
<div class="b" style="left:2397.00px;top:606.00px;width:2.00px;height:164.00px;background:repeating-linear-gradient(to bottom,#919191 0 5px,transparent 5px 9px)"></div>
<div class="b" style="left:2397.00px;top:770.00px;width:2.00px;height:165.50px;background:repeating-linear-gradient(to bottom,#919191 0 5px,transparent 5px 9px)"></div>
<div class="b" style="left:2397.00px;top:935.50px;width:2.00px;height:164.50px;background:repeating-linear-gradient(to bottom,#919191 0 5px,transparent 5px 9px)"></div>
<div class="b" style="left:2397.00px;top:1100.00px;width:2.00px;height:164.00px;background:repeating-linear-gradient(to bottom,#919191 0 5px,transparent 5px 9px)"></div>
<div class="b" style="left:2397.00px;top:1264.00px;width:2.00px;height:165.00px;background:repeating-linear-gradient(to bottom,#919191 0 5px,transparent 5px 9px)"></div>
<div class="b" style="left:205.00px;top:606.00px;width:2.00px;height:734.00px;background:#8c8c8c"></div>
<div class="t" style="left:317.00px;top:522.53px;font-size:23.00px;line-height:23.00px;color:#aaa7a3;font-weight:bold;">ID</div>
<div class="t" style="left:406.00px;top:522.53px;font-size:23.00px;line-height:23.00px;color:#aaa7a3;font-weight:bold;">Name</div>
<div class="t" style="left:542.50px;top:522.53px;font-size:23.00px;line-height:23.00px;color:#aaa7a3;font-weight:bold;">Email</div>
<div class="t" style="left:849.00px;top:522.53px;font-size:23.00px;line-height:23.00px;color:#aaa7a3;font-weight:bold;">Group</div>
<div class="t" style="left:985.00px;top:522.53px;font-size:23.00px;line-height:23.00px;color:#aaa7a3;font-weight:bold;">Phone</div>
<div class="t" style="left:1091.00px;top:522.53px;font-size:23.00px;line-height:23.00px;color:#aaa7a3;font-weight:bold;">ZIP</div>
<div class="t" style="left:1200.00px;top:522.53px;font-size:23.00px;line-height:23.00px;color:#aaa7a3;font-weight:bold;">Country</div>
<div class="t" style="left:1323.00px;top:522.53px;font-size:23.00px;line-height:23.00px;color:#aaa7a3;font-weight:bold;">State/Province</div>
<div class="t" style="left:1518.00px;top:507.38px;font-size:23.00px;line-height:23.00px;color:#aaa7a3;font-weight:bold;">Customer</div>
<div class="t" style="left:1518.00px;top:537.68px;font-size:23.00px;line-height:23.00px;color:#aaa7a3;font-weight:bold;">Since</div>
<div class="t" style="left:1661.00px;top:507.38px;font-size:23.00px;line-height:23.00px;color:#aaa7a3;font-weight:bold;">Web</div>
<div class="t" style="left:1661.00px;top:537.68px;font-size:23.00px;line-height:23.00px;color:#aaa7a3;font-weight:bold;">Site</div>
<div class="t" style="left:1782.00px;top:507.38px;font-size:23.00px;line-height:23.00px;color:#aaa7a3;font-weight:bold;">Confirmed</div>
<div class="t" style="left:1782.00px;top:537.68px;font-size:23.00px;line-height:23.00px;color:#aaa7a3;font-weight:bold;">email</div>
<div class="t" style="left:1957.00px;top:492.23px;font-size:23.00px;line-height:23.00px;color:#aaa7a3;font-weight:bold;">Account</div>
<div class="t" style="left:1957.00px;top:522.53px;font-size:23.00px;line-height:23.00px;color:#aaa7a3;font-weight:bold;">Created</div>
<div class="t" style="left:1957.00px;top:552.83px;font-size:23.00px;line-height:23.00px;color:#aaa7a3;font-weight:bold;">in</div>
<div class="t" style="left:2082.00px;top:492.23px;font-size:23.00px;line-height:23.00px;color:#aaa7a3;font-weight:bold;">Date</div>
<div class="t" style="left:2082.00px;top:522.53px;font-size:23.00px;line-height:23.00px;color:#aaa7a3;font-weight:bold;">of</div>
<div class="t" style="left:2082.00px;top:552.83px;font-size:23.00px;line-height:23.00px;color:#aaa7a3;font-weight:bold;">Birth</div>
<div class="t" style="left:2172.00px;top:507.38px;font-size:23.00px;line-height:23.00px;color:#aaa7a3;font-weight:bold;">Tax VAT</div>
<div class="t" style="left:2172.00px;top:537.68px;font-size:23.00px;line-height:23.00px;color:#aaa7a3;font-weight:bold;">Number</div>
<div class="t" style="left:2299.00px;top:522.53px;font-size:23.00px;line-height:23.00px;color:#aaa7a3;font-weight:bold;">Gender</div>
<div class="t" style="left:2417.00px;top:522.53px;font-size:23.00px;line-height:23.00px;color:#aaa7a3;font-weight:bold;">Action</div>
<div class="t" style="left:317.00px;top:674.23px;font-size:23.00px;line-height:23.00px;color:#2b2622;">1</div>
<div class="t" style="left:406.00px;top:659.00px;font-size:23.00px;line-height:23.00px;color:#2b2622;">Veronica</div>
<div class="t" style="left:406.00px;top:689.47px;font-size:23.00px;line-height:23.00px;color:#2b2622;">Costello</div>
<div class="t" style="left:542.50px;top:674.23px;font-size:23.00px;line-height:23.00px;color:#2b2622;">roni_cost@example.com</div>
<div class="t" style="left:849.00px;top:659.00px;font-size:23.00px;line-height:23.00px;color:#2b2622;">VIP (30%</div>
<div class="t" style="left:849.00px;top:689.47px;font-size:23.00px;line-height:23.00px;color:#2b2622;">Discount)</div>
<div class="t" style="left:985.00px;top:643.76px;font-size:23.00px;line-height:23.00px;color:#2b2622;">(555)</div>
<div class="t" style="left:985.00px;top:674.23px;font-size:23.00px;line-height:23.00px;color:#2b2622;">229-</div>
<div class="t" style="left:985.00px;top:704.70px;font-size:23.00px;line-height:23.00px;color:#2b2622;">3326</div>
<div class="t" style="left:1091.00px;top:659.00px;font-size:23.00px;line-height:23.00px;color:#2b2622;">49628-</div>
<div class="t" style="left:1091.00px;top:689.47px;font-size:23.00px;line-height:23.00px;color:#2b2622;">7978</div>
<div class="t" style="left:1200.00px;top:659.00px;font-size:23.00px;line-height:23.00px;color:#2b2622;">United</div>
<div class="t" style="left:1200.00px;top:689.47px;font-size:23.00px;line-height:23.00px;color:#2b2622;">States</div>
<div class="t" style="left:1323.00px;top:674.23px;font-size:23.00px;line-height:23.00px;color:#2b2622;">Michigan</div>
<div class="t" style="left:1518.00px;top:628.53px;font-size:23.00px;line-height:23.00px;color:#2b2622;">Jun 24,</div>
<div class="t" style="left:1518.00px;top:659.00px;font-size:23.00px;line-height:23.00px;color:#2b2622;">2016</div>
<div class="t" style="left:1518.00px;top:689.47px;font-size:23.00px;line-height:23.00px;color:#2b2622;">7:22:18</div>
<div class="t" style="left:1518.00px;top:719.94px;font-size:23.00px;line-height:23.00px;color:#2b2622;">AM</div>
<div class="t" style="left:1661.00px;top:659.00px;font-size:23.00px;line-height:23.00px;color:#2b2622;">Main</div>
<div class="t" style="left:1661.00px;top:689.47px;font-size:23.00px;line-height:23.00px;color:#2b2622;">Website</div>
<div class="t" style="left:1782.00px;top:643.76px;font-size:23.00px;line-height:23.00px;color:#2b2622;">Confirmation</div>
<div class="t" style="left:1782.00px;top:674.23px;font-size:23.00px;line-height:23.00px;color:#2b2622;">Not</div>
<div class="t" style="left:1782.00px;top:704.70px;font-size:23.00px;line-height:23.00px;color:#2b2622;">Required</div>
<div class="t" style="left:1957.00px;top:643.76px;font-size:23.00px;line-height:23.00px;color:#2b2622;">Default</div>
<div class="t" style="left:1957.00px;top:674.23px;font-size:23.00px;line-height:23.00px;color:#2b2622;">Store</div>
<div class="t" style="left:1957.00px;top:704.70px;font-size:23.00px;line-height:23.00px;color:#2b2622;">View</div>
<div class="t" style="left:2082.00px;top:643.76px;font-size:23.00px;line-height:23.00px;color:#2b2622;">Dec</div>
<div class="t" style="left:2082.00px;top:674.23px;font-size:23.00px;line-height:23.00px;color:#2b2622;">15,</div>
<div class="t" style="left:2082.00px;top:704.70px;font-size:23.00px;line-height:23.00px;color:#2b2622;">1973</div>
<div class="t" style="left:2299.00px;top:674.23px;font-size:23.00px;line-height:23.00px;color:#2b2622;">Female</div>
<div class="t" style="left:2433.50px;top:677.23px;font-size:23.00px;line-height:23.00px;color:#1d5a93;">Edit</div>
<div class="b" style="left:238.00px;top:673.00px;width:27.00px;height:27.00px;background:#a6a6a6;border:1.5px solid #8a8a8a"></div>
<div class="t" style="left:317.00px;top:839.23px;font-size:23.00px;line-height:23.00px;color:#2b2622;">2</div>
<div class="t" style="left:406.00px;top:824.00px;font-size:23.00px;line-height:23.00px;color:#2b2622;">Jane</div>
<div class="t" style="left:406.00px;top:854.47px;font-size:23.00px;line-height:23.00px;color:#2b2622;">Eyre</div>
<div class="t" style="left:542.50px;top:839.23px;font-size:23.00px;line-height:23.00px;color:#2b2622;">jane.eyre@example.com</div>
<div class="t" style="left:849.00px;top:824.00px;font-size:23.00px;line-height:23.00px;color:#2b2622;">VIP (30%</div>
<div class="t" style="left:849.00px;top:854.47px;font-size:23.00px;line-height:23.00px;color:#2b2622;">Discount)</div>
<div class="t" style="left:1518.00px;top:793.53px;font-size:23.00px;line-height:23.00px;color:#2b2622;">Jan 11,</div>
<div class="t" style="left:1518.00px;top:824.00px;font-size:23.00px;line-height:23.00px;color:#2b2622;">2021</div>
<div class="t" style="left:1518.00px;top:854.47px;font-size:23.00px;line-height:23.00px;color:#2b2622;">6:18:14</div>
<div class="t" style="left:1518.00px;top:884.94px;font-size:23.00px;line-height:23.00px;color:#2b2622;">AM</div>
<div class="t" style="left:1661.00px;top:824.00px;font-size:23.00px;line-height:23.00px;color:#2b2622;">Main</div>
<div class="t" style="left:1661.00px;top:854.47px;font-size:23.00px;line-height:23.00px;color:#2b2622;">Website</div>
<div class="t" style="left:1782.00px;top:808.76px;font-size:23.00px;line-height:23.00px;color:#2b2622;">Confirmation</div>
<div class="t" style="left:1782.00px;top:839.23px;font-size:23.00px;line-height:23.00px;color:#2b2622;">Not</div>
<div class="t" style="left:1782.00px;top:869.70px;font-size:23.00px;line-height:23.00px;color:#2b2622;">Required</div>
<div class="t" style="left:1957.00px;top:808.76px;font-size:23.00px;line-height:23.00px;color:#2b2622;">Default</div>
<div class="t" style="left:1957.00px;top:839.23px;font-size:23.00px;line-height:23.00px;color:#2b2622;">Store</div>
<div class="t" style="left:1957.00px;top:869.70px;font-size:23.00px;line-height:23.00px;color:#2b2622;">View</div>
<div class="t" style="left:2433.50px;top:842.23px;font-size:23.00px;line-height:23.00px;color:#1d5a93;">Edit</div>
<div class="b" style="left:238.00px;top:838.00px;width:27.00px;height:27.00px;background:#a6a6a6;border:1.5px solid #8a8a8a"></div>
<div class="t" style="left:317.00px;top:1004.73px;font-size:23.00px;line-height:23.00px;color:#2b2622;">3</div>
<div class="t" style="left:406.00px;top:989.50px;font-size:23.00px;line-height:23.00px;color:#2b2622;">Michael</div>
<div class="t" style="left:406.00px;top:1019.97px;font-size:23.00px;line-height:23.00px;color:#2b2622;">Smith</div>
<div class="t" style="left:542.50px;top:1004.73px;font-size:23.00px;line-height:23.00px;color:#2b2622;">michael@example.com</div>
<div class="t" style="left:849.00px;top:989.50px;font-size:23.00px;line-height:23.00px;color:#2b2622;">VIP (30%</div>
<div class="t" style="left:849.00px;top:1019.97px;font-size:23.00px;line-height:23.00px;color:#2b2622;">Discount)</div>
<div class="t" style="left:1518.00px;top:959.03px;font-size:23.00px;line-height:23.00px;color:#2b2622;">Jan 11,</div>
<div class="t" style="left:1518.00px;top:989.50px;font-size:23.00px;line-height:23.00px;color:#2b2622;">2021</div>
<div class="t" style="left:1518.00px;top:1019.97px;font-size:23.00px;line-height:23.00px;color:#2b2622;">6:19:11</div>
<div class="t" style="left:1518.00px;top:1050.44px;font-size:23.00px;line-height:23.00px;color:#2b2622;">AM</div>
<div class="t" style="left:1661.00px;top:989.50px;font-size:23.00px;line-height:23.00px;color:#2b2622;">Main</div>
<div class="t" style="left:1661.00px;top:1019.97px;font-size:23.00px;line-height:23.00px;color:#2b2622;">Website</div>
<div class="t" style="left:1782.00px;top:974.26px;font-size:23.00px;line-height:23.00px;color:#2b2622;">Confirmation</div>
<div class="t" style="left:1782.00px;top:1004.73px;font-size:23.00px;line-height:23.00px;color:#2b2622;">Not</div>
<div class="t" style="left:1782.00px;top:1035.20px;font-size:23.00px;line-height:23.00px;color:#2b2622;">Required</div>
<div class="t" style="left:1957.00px;top:974.26px;font-size:23.00px;line-height:23.00px;color:#2b2622;">Default</div>
<div class="t" style="left:1957.00px;top:1004.73px;font-size:23.00px;line-height:23.00px;color:#2b2622;">Store</div>
<div class="t" style="left:1957.00px;top:1035.20px;font-size:23.00px;line-height:23.00px;color:#2b2622;">View</div>
<div class="t" style="left:2433.50px;top:1007.73px;font-size:23.00px;line-height:23.00px;color:#1d5a93;">Edit</div>
<div class="b" style="left:238.00px;top:1003.50px;width:27.00px;height:27.00px;background:#a6a6a6;border:1.5px solid #8a8a8a"></div>
<div class="t" style="left:317.00px;top:1169.23px;font-size:23.00px;line-height:23.00px;color:#2b2622;">4</div>
<div class="t" style="left:406.00px;top:1154.00px;font-size:23.00px;line-height:23.00px;color:#2b2622;">Guy</div>
<div class="t" style="left:406.00px;top:1184.47px;font-size:23.00px;line-height:23.00px;color:#2b2622;">Kelly</div>
<div class="t" style="left:542.50px;top:1169.23px;font-size:23.00px;line-height:23.00px;color:#2b2622;">guy.s.kelly@business.com</div>
<div class="t" style="left:849.00px;top:1154.00px;font-size:23.00px;line-height:23.00px;color:#2b2622;">VIP (30%</div>
<div class="t" style="left:849.00px;top:1184.47px;font-size:23.00px;line-height:23.00px;color:#2b2622;">Discount)</div>
<div class="t" style="left:1518.00px;top:1123.53px;font-size:23.00px;line-height:23.00px;color:#2b2622;">Jan 11,</div>
<div class="t" style="left:1518.00px;top:1154.00px;font-size:23.00px;line-height:23.00px;color:#2b2622;">2021</div>
<div class="t" style="left:1518.00px;top:1184.47px;font-size:23.00px;line-height:23.00px;color:#2b2622;">6:20:00</div>
<div class="t" style="left:1518.00px;top:1214.94px;font-size:23.00px;line-height:23.00px;color:#2b2622;">AM</div>
<div class="t" style="left:1661.00px;top:1154.00px;font-size:23.00px;line-height:23.00px;color:#2b2622;">Main</div>
<div class="t" style="left:1661.00px;top:1184.47px;font-size:23.00px;line-height:23.00px;color:#2b2622;">Website</div>
<div class="t" style="left:1782.00px;top:1138.76px;font-size:23.00px;line-height:23.00px;color:#2b2622;">Confirmation</div>
<div class="t" style="left:1782.00px;top:1169.23px;font-size:23.00px;line-height:23.00px;color:#2b2622;">Not</div>
<div class="t" style="left:1782.00px;top:1199.70px;font-size:23.00px;line-height:23.00px;color:#2b2622;">Required</div>
<div class="t" style="left:1957.00px;top:1138.76px;font-size:23.00px;line-height:23.00px;color:#2b2622;">Default</div>
<div class="t" style="left:1957.00px;top:1169.23px;font-size:23.00px;line-height:23.00px;color:#2b2622;">Store</div>
<div class="t" style="left:1957.00px;top:1199.70px;font-size:23.00px;line-height:23.00px;color:#2b2622;">View</div>
<div class="t" style="left:2433.50px;top:1172.23px;font-size:23.00px;line-height:23.00px;color:#1d5a93;">Edit</div>
<div class="b" style="left:238.00px;top:1168.00px;width:27.00px;height:27.00px;background:#a6a6a6;border:1.5px solid #8a8a8a"></div>
<div class="t" style="left:317.00px;top:1333.23px;font-size:23.00px;line-height:23.00px;color:#2b2622;">5</div>
<div class="t" style="left:406.00px;top:1302.76px;font-size:23.00px;line-height:23.00px;color:#2b2622;">Jeremy</div>
<div class="t" style="left:406.00px;top:1333.23px;font-size:23.00px;line-height:23.00px;color:#2b2622;">Keith</div>
<div class="t" style="left:406.00px;top:1363.70px;font-size:23.00px;line-height:23.00px;color:#2b2622;">Smith</div>
<div class="t" style="left:542.50px;top:1333.23px;font-size:23.00px;line-height:23.00px;color:#2b2622;">jeremy@business.com</div>
<div class="t" style="left:849.00px;top:1318.00px;font-size:23.00px;line-height:23.00px;color:#2b2622;">VIP (30%</div>
<div class="t" style="left:849.00px;top:1348.47px;font-size:23.00px;line-height:23.00px;color:#2b2622;">Discount)</div>
<div class="t" style="left:1518.00px;top:1287.53px;font-size:23.00px;line-height:23.00px;color:#2b2622;">Jan 11,</div>
<div class="t" style="left:1518.00px;top:1318.00px;font-size:23.00px;line-height:23.00px;color:#2b2622;">2021</div>
<div class="t" style="left:1518.00px;top:1348.47px;font-size:23.00px;line-height:23.00px;color:#2b2622;">6:21:00</div>
<div class="t" style="left:1518.00px;top:1378.94px;font-size:23.00px;line-height:23.00px;color:#2b2622;">AM</div>
<div class="t" style="left:1661.00px;top:1318.00px;font-size:23.00px;line-height:23.00px;color:#2b2622;">Main</div>
<div class="t" style="left:1661.00px;top:1348.47px;font-size:23.00px;line-height:23.00px;color:#2b2622;">Website</div>
<div class="t" style="left:1782.00px;top:1302.76px;font-size:23.00px;line-height:23.00px;color:#2b2622;">Confirmation</div>
<div class="t" style="left:1782.00px;top:1333.23px;font-size:23.00px;line-height:23.00px;color:#2b2622;">Not</div>
<div class="t" style="left:1782.00px;top:1363.70px;font-size:23.00px;line-height:23.00px;color:#2b2622;">Required</div>
<div class="t" style="left:1957.00px;top:1302.76px;font-size:23.00px;line-height:23.00px;color:#2b2622;">Default</div>
<div class="t" style="left:1957.00px;top:1333.23px;font-size:23.00px;line-height:23.00px;color:#2b2622;">Store</div>
<div class="t" style="left:1957.00px;top:1363.70px;font-size:23.00px;line-height:23.00px;color:#2b2622;">View</div>
<div class="t" style="left:2433.50px;top:1336.23px;font-size:23.00px;line-height:23.00px;color:#1d5a93;">Edit</div>
<div class="b" style="left:238.00px;top:1332.00px;width:27.00px;height:27.00px;background:#a6a6a6;border:1.5px solid #8a8a8a"></div>
</div></div>
<div class="b" style="left:205.00px;top:435.00px;width:330.50px;height:501.00px;background:#a6a6a6;border:2px solid #1b5894;border-radius:2px;box-shadow:2px 2px 8px rgba(0,0,0,.38)"></div>
<div class="b" style="left:207.00px;top:669.50px;width:326.50px;height:99.50px;background:#959595"></div>
<div class="t" style="left:231.50px;top:457.74px;font-size:25.00px;line-height:25.00px;color:#2b2622;">Delete</div>
<div class="t" style="left:231.50px;top:524.24px;font-size:25.00px;line-height:25.00px;color:#2b2622;">Subscribe to Newsletter</div>
<div class="t" style="left:231.50px;top:590.24px;font-size:25.00px;line-height:25.00px;color:#2b2622;">Unsubscribe from</div>
<div class="t" style="left:231.50px;top:623.24px;font-size:25.00px;line-height:25.00px;color:#2b2622;">Newsletter</div>
<div class="t" style="left:231.50px;top:689.34px;font-size:25.00px;line-height:25.00px;color:#2b2622;">Assign a Customer</div>
<div class="t" style="left:231.50px;top:722.34px;font-size:25.00px;line-height:25.00px;color:#2b2622;">Group</div>
<div class="t" style="left:231.50px;top:789.74px;font-size:25.00px;line-height:25.00px;color:#2b2622;">Edit</div>
<div class="t" style="left:231.50px;top:856.24px;font-size:25.00px;line-height:25.00px;color:#2b2622;">Assign to Company</div>
<div class="t" style="left:231.50px;top:889.24px;font-size:25.00px;line-height:25.00px;color:#2b2622;">Account</div>
<svg style="left:0;top:0" width="600" height="800">
<path fill="#111" d="M513 693.5 L522 700.7 L513 708 Z"/>
</svg>
<div class="b" style="left:205.00px;top:939.00px;width:330.50px;height:336.50px;background:#a6a6a6;border:2px solid #1b5894;border-radius:2px;box-shadow:2px 2px 8px rgba(0,0,0,.38)"></div>
<div class="t" style="left:231.50px;top:961.84px;font-size:25.00px;line-height:25.00px;color:#2b2622;">General</div>
<div class="t" style="left:231.50px;top:1028.04px;font-size:25.00px;line-height:25.00px;color:#2b2622;">Wholesale</div>
<div class="t" style="left:231.50px;top:1095.04px;font-size:25.00px;line-height:25.00px;color:#2b2622;">Retailer</div>
<div class="t" style="left:231.50px;top:1160.84px;font-size:25.00px;line-height:25.00px;color:#2b2622;">VIP (30% Discount)</div>
<div class="t" style="left:231.50px;top:1227.84px;font-size:25.00px;line-height:25.00px;color:#2b2622;">Customer group test</div>
<div class="b" style="left:2462.00px;top:0.00px;width:38.00px;height:249.00px;background:#135a96;border-bottom-left-radius:30px"></div>
<div class="t" style="left:2462px;top:0;width:38px;height:249px"><div style="position:absolute;left:4px;top:214px;transform:rotate(-90deg);transform-origin:0 0;font-size:25px;line-height:25px;color:#a3b6c8;white-space:nowrap">demo navigation</div></div>
<svg style="left:0;top:0" width="2500" height="1340">
<defs><clipPath id="av"><circle cx="2430.6" cy="1270.6" r="46.8"/></clipPath>
<filter id="blr"><feGaussianBlur stdDeviation="0.8"/></filter></defs>
<g clip-path="url(#av)">
<g transform="translate(2370 1210) scale(0.08953)" filter="url(#blr)">
<rect x="0" y="0" width="1340" height="1340" fill="#dcd7d5"/>
<path d="M300 1080 C260 700 360 300 600 200 C860 120 1060 260 1120 520 C1170 760 1150 980 1050 1120 L700 1250 Z" fill="#8e5b3b"/>
<path d="M880 720 C980 780 1110 900 1060 1120 L800 1200 Z" fill="#3b261a"/>
<path d="M440 820 L780 780 L800 1200 L420 1200 Z" fill="#efc6aa"/>
<ellipse cx="640" cy="580" rx="285" ry="320" fill="#f1c8a9" transform="rotate(-15 640 580)"/>
<path d="M360 560 C380 380 480 250 640 215 C780 190 880 250 940 340 L900 380 C820 300 650 290 520 360 C440 420 390 490 375 600 Z" fill="#8e5b3b"/>
<path d="M905 360 C960 480 960 620 930 760 C1000 650 1010 460 930 330 Z" fill="#8e5b3b"/>
<ellipse cx="515" cy="455" rx="40" ry="15" fill="#6a6c78" transform="rotate(15 515 455)"/>
<ellipse cx="745" cy="520" rx="42" ry="15" fill="#6a6c78" transform="rotate(15 745 520)"/>
<path d="M460 650 Q560 760 670 705 Q560 690 460 650 Z" fill="#f8f4ee" stroke="#cf7f70" stroke-width="22"/>
<path d="M420 1130 Q600 1070 820 1090 L900 1340 L380 1340 Z" fill="#1d2322"/>
</g>
</g>
<circle cx="2430.6" cy="1270.6" r="49.3" fill="none" stroke="#1545c8" stroke-width="6.2"/>
<circle cx="2430.6" cy="1270.6" r="46.5" fill="none" stroke="#2b3a6a" stroke-width="1"/>
</svg>
<div class="b" style="left:816.00px;top:76.00px;width:868.00px;height:366.00px;background:#ffffff;box-shadow:0 0 14px 2px rgba(0,0,0,.38)"></div>
<svg style="left:0;top:0" width="2500" height="500">
<path d="M1630.5 94.5 L1663 126.5 M1663 94.5 L1630.5 126.5" stroke="#756c66" stroke-width="3.2" fill="none"/>
</svg>
<div class="t" style="left:868.40px;top:132.50px;font-size:43.00px;line-height:43.00px;color:#41362f;">Assign a Customer Group</div>
<div class="t" style="left:868.40px;top:203.54px;font-size:25.00px;line-height:25.00px;color:#41362f;">Are you sure to assign selected customers to new group? (2</div>
<div class="t" style="left:868.40px;top:236.84px;font-size:25.00px;line-height:25.00px;color:#41362f;">records)</div>
<div class="t" style="left:1404.00px;top:337.32px;font-size:27.50px;line-height:27.50px;color:#0f78d6;font-weight:bold;">Cancel</div>
<div class="b" style="left:1510.20px;top:293.30px;width:143.70px;height:116.70px;border:4.5px solid #ff2600"></div>
<div class="b" style="left:1530.70px;top:309.00px;width:102.60px;height:81.50px;background:#332e2b;border:2px solid #0e7fdc"></div>
<div class="t" style="left:1530.70px;top:337.32px;font-size:27.50px;line-height:27.50px;color:#ffffff;font-weight:bold;width:102.60px;text-align:center;">OK</div>
</body></html>
